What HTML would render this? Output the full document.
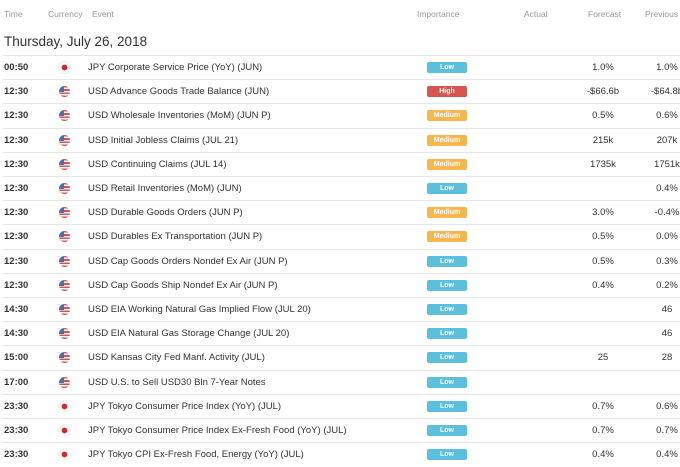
<!DOCTYPE html>
<html><head><meta charset="utf-8"><style>
body{margin:0;width:680px;height:467px;overflow:hidden;background:#fff;font-family:"Liberation Sans",Arial,sans-serif;position:relative}
.h{position:absolute;top:9px;font-size:8.5px;color:#999}
.date{position:absolute;left:4px;top:34px;font-size:13.5px;color:#333}
.r{position:absolute;left:3px;width:677px;height:24.2px;border-top:1px solid #e6e6e6;box-sizing:border-box}
.r div{position:absolute;top:0;line-height:23px;font-size:9.5px;color:#333;white-space:nowrap}
.t{left:1px;font-weight:bold}
.e{left:85px}
.b{left:424px;top:6px!important;width:40px;height:11px;line-height:11px!important;border-radius:2px;color:#fff!important;font-size:7px!important;text-align:center;font-weight:bold}
.lo{background:#5bc0de}.hi{background:#d9534f}.me{background:#f9b64e}
.f{left:570px;width:60px;text-align:center}
.p{left:634px;width:60px;text-align:center}
.fl{left:56px;top:6px!important;width:11px;height:11px;border-radius:50%}
.jp{background:radial-gradient(circle,#d22 0 2.6px,#fff 3px);box-shadow:0 0 0 1px #eee}
.us{background:linear-gradient(#4a6fb0 0 0) 0 0/5px 6px no-repeat,repeating-linear-gradient(#d9534f 0 1.6px,#fff 1.6px 3.2px)}
</style></head><body>
<div class="h" style="left:4px">Time</div>
<div class="h" style="left:48px">Currency</div>
<div class="h" style="left:92px">Event</div>
<div class="h" style="left:417px">Importance</div>
<div class="h" style="left:524px">Actual</div>
<div class="h" style="left:588px">Forecast</div>
<div class="h" style="left:645px">Previous</div>
<div class="date">Thursday, July 26, 2018</div>

<div class="r" style="top:55px"><div class="t">00:50</div><div class="fl jp"></div><div class="e">JPY Corporate Service Price (YoY) (JUN)</div><div class="b lo">Low</div><div class="f">1.0%</div><div class="p">1.0%</div></div>
<div class="r" style="top:79.2px"><div class="t">12:30</div><div class="fl us"></div><div class="e">USD Advance Goods Trade Balance (JUN)</div><div class="b hi">High</div><div class="f">-$66.6b</div><div class="p">-$64.8b</div></div>
<div class="r" style="top:103.4px"><div class="t">12:30</div><div class="fl us"></div><div class="e">USD Wholesale Inventories (MoM) (JUN P)</div><div class="b me">Medium</div><div class="f">0.5%</div><div class="p">0.6%</div></div>
<div class="r" style="top:127.6px"><div class="t">12:30</div><div class="fl us"></div><div class="e">USD Initial Jobless Claims (JUL 21)</div><div class="b me">Medium</div><div class="f">215k</div><div class="p">207k</div></div>
<div class="r" style="top:151.8px"><div class="t">12:30</div><div class="fl us"></div><div class="e">USD Continuing Claims (JUL 14)</div><div class="b me">Medium</div><div class="f">1735k</div><div class="p">1751k</div></div>
<div class="r" style="top:176px"><div class="t">12:30</div><div class="fl us"></div><div class="e">USD Retail Inventories (MoM) (JUN)</div><div class="b lo">Low</div><div class="f"></div><div class="p">0.4%</div></div>
<div class="r" style="top:200.2px"><div class="t">12:30</div><div class="fl us"></div><div class="e">USD Durable Goods Orders (JUN P)</div><div class="b me">Medium</div><div class="f">3.0%</div><div class="p">-0.4%</div></div>
<div class="r" style="top:224.4px"><div class="t">12:30</div><div class="fl us"></div><div class="e">USD Durables Ex Transportation (JUN P)</div><div class="b me">Medium</div><div class="f">0.5%</div><div class="p">0.0%</div></div>
<div class="r" style="top:248.6px"><div class="t">12:30</div><div class="fl us"></div><div class="e">USD Cap Goods Orders Nondef Ex Air (JUN P)</div><div class="b lo">Low</div><div class="f">0.5%</div><div class="p">0.3%</div></div>
<div class="r" style="top:272.8px"><div class="t">12:30</div><div class="fl us"></div><div class="e">USD Cap Goods Ship Nondef Ex Air (JUN P)</div><div class="b lo">Low</div><div class="f">0.4%</div><div class="p">0.2%</div></div>
<div class="r" style="top:297px"><div class="t">14:30</div><div class="fl us"></div><div class="e">USD EIA Working Natural Gas Implied Flow (JUL 20)</div><div class="b lo">Low</div><div class="f"></div><div class="p">46</div></div>
<div class="r" style="top:321.2px"><div class="t">14:30</div><div class="fl us"></div><div class="e">USD EIA Natural Gas Storage Change (JUL 20)</div><div class="b lo">Low</div><div class="f"></div><div class="p">46</div></div>
<div class="r" style="top:345.4px"><div class="t">15:00</div><div class="fl us"></div><div class="e">USD Kansas City Fed Manf. Activity (JUL)</div><div class="b lo">Low</div><div class="f">25</div><div class="p">28</div></div>
<div class="r" style="top:369.6px"><div class="t">17:00</div><div class="fl us"></div><div class="e">USD U.S. to Sell USD30 Bln 7-Year Notes</div><div class="b lo">Low</div></div>
<div class="r" style="top:393.8px"><div class="t">23:30</div><div class="fl jp"></div><div class="e">JPY Tokyo Consumer Price Index (YoY) (JUL)</div><div class="b lo">Low</div><div class="f">0.7%</div><div class="p">0.6%</div></div>
<div class="r" style="top:418px"><div class="t">23:30</div><div class="fl jp"></div><div class="e">JPY Tokyo Consumer Price Index Ex-Fresh Food (YoY) (JUL)</div><div class="b lo">Low</div><div class="f">0.7%</div><div class="p">0.7%</div></div>
<div class="r" style="top:442.2px"><div class="t">23:30</div><div class="fl jp"></div><div class="e">JPY Tokyo CPI Ex-Fresh Food, Energy (YoY) (JUL)</div><div class="b lo">Low</div><div class="f">0.4%</div><div class="p">0.4%</div></div>
</body></html>
